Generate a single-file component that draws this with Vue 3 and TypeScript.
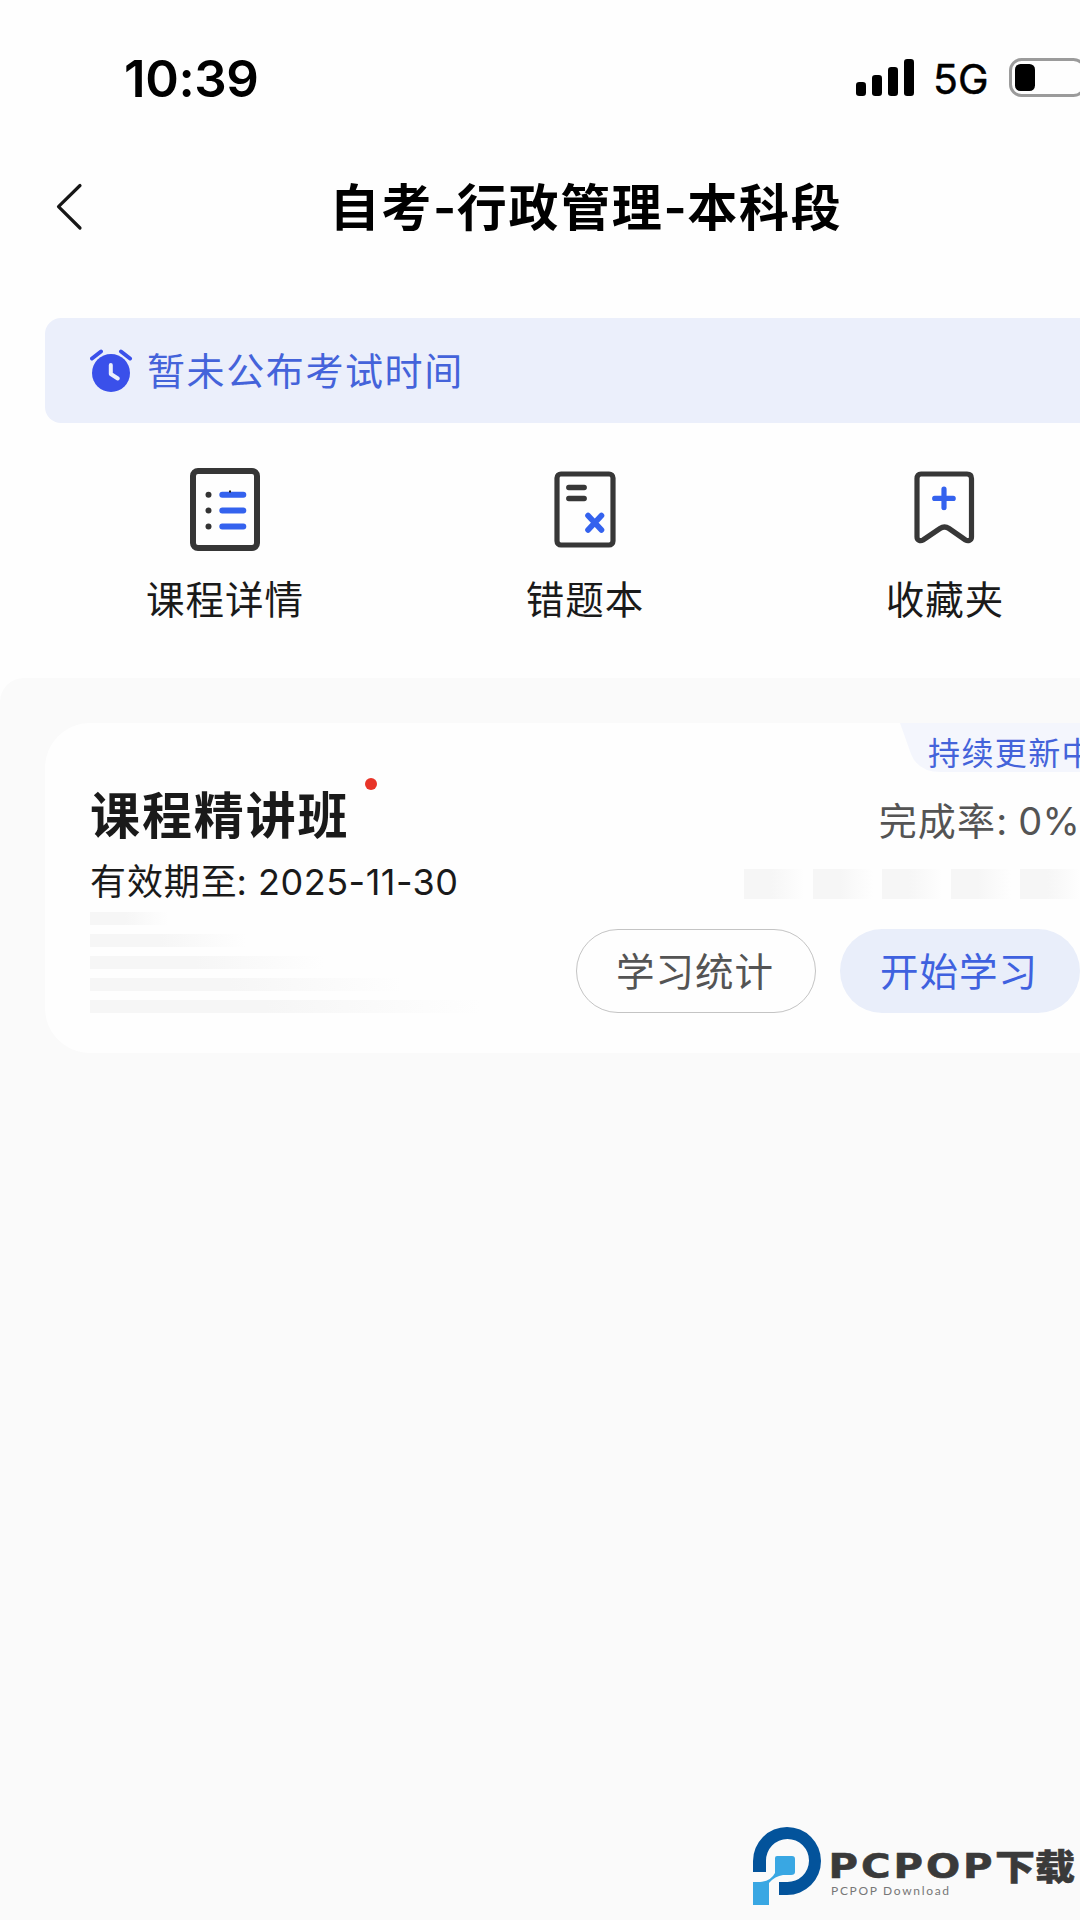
<script setup lang="ts">
interface Shortcut {
  id: 'detail' | 'mistakes' | 'favorites'
  label: string
}

const shortcuts: Shortcut[] = [
  { id: 'detail', label: '课程详情' },
  { id: 'mistakes', label: '错题本' },
  { id: 'favorites', label: '收藏夹' },
]

const stripes: number[] = [78, 156, 234, 312, 390]
const blocks = 5
</script>

<template>
  <div class="viewport">
    <div class="screen">
      <header class="status">
        <span class="time">10:39</span>
        <div class="indicators">
          <svg class="signal" width="58" height="38" viewBox="0 0 58 38">
            <rect x="0" y="23" width="10" height="14" rx="3.2" />
            <rect x="16" y="16" width="10" height="21" rx="3.2" />
            <rect x="32" y="8" width="10" height="29" rx="3.2" />
            <rect x="48" y="0" width="10" height="37" rx="3.2" />
          </svg>
          <span class="network">5G</span>
          <svg class="battery" width="84" height="40" viewBox="0 0 84 40">
            <rect x="1.5" y="1.5" width="74" height="36" rx="11" fill="none" stroke="#9b9b9b" stroke-width="3" />
            <rect x="6" y="6" width="20" height="27" rx="5.5" />
          </svg>
        </div>
      </header>

      <nav class="navbar">
        <svg class="back" width="30" height="50" viewBox="0 0 30 50">
          <path d="M25 3.500 3.500 24.700 25 46" fill="none" stroke="#161616" stroke-width="3.200" stroke-linecap="round" stroke-linejoin="round" />
        </svg>
        <h1 class="title">自考<span class="dash">-</span>行政管理<span class="dash">-</span>本科段</h1>
      </nav>

      <section class="notice">
        <svg class="clock" width="44" height="44" viewBox="0 0 44 44">
          <circle cx="21" cy="24" r="19" fill="#3a50ea" />
          <path d="M2 9.500 11 2.500M31 2.500l9 7" fill="none" stroke="#3a50ea" stroke-width="4" stroke-linecap="round" />
          <path d="M20.800 16v9l7 4.500" fill="none" stroke="#ebeffc" stroke-width="4" stroke-linecap="round" stroke-linejoin="round" />
        </svg>
        <span class="notice-text">暂未公布考试时间</span>
      </section>

      <section class="shortcuts">
        <div v-for="item in shortcuts" :key="item.id" class="shortcut">
          <svg v-if="item.id === 'detail'" width="84" height="84" viewBox="0 0 84 84" fill="none">
            <rect x="10" y="3" width="64" height="77" rx="5" stroke="#363636" stroke-width="6" />
            <g fill="#333">
              <circle cx="25.500" cy="26.700" r="3" />
              <circle cx="25.500" cy="42.500" r="3" />
              <circle cx="25.500" cy="58.500" r="3" />
            </g>
            <path d="M39.300 26.700h21M39.300 42.500h21M39.300 58.500h21" stroke="#3462ee" stroke-width="6" stroke-linecap="round" />
            <rect x="46" y="22.500" width="2" height="2" fill="#222" />
          </svg>
          <svg v-else-if="item.id === 'mistakes'" width="84" height="84" viewBox="0 0 84 84" fill="none">
            <rect x="14" y="6" width="56" height="71" rx="4" stroke="#373737" stroke-width="5.200" />
            <path d="M25.800 19.500h15.400M25.800 30.500h15.400" stroke="#373737" stroke-width="5.400" stroke-linecap="round" />
            <path d="M45 47.500l13.500 14.500M58.500 47.500l-13.500 14.500" stroke="#3462ee" stroke-width="5.600" stroke-linecap="round" />
          </svg>
          <svg v-else width="84" height="84" viewBox="0 0 84 84" fill="none">
            <path d="M18 6H64Q68.500 6 68.500 10.500V69C68.500 72.500 65 73.500 62.500 72L46 60.500Q41.500 57.500 37 60.500L20 72C17.500 73.500 14 72.500 14 69V10.500Q14 6 18 6Z" stroke="#373737" stroke-width="5.200" stroke-linejoin="round" />
            <path d="M31.700 30.400h18.500M41 21.200v18.500" stroke="#3462ee" stroke-width="5.200" stroke-linecap="round" />
          </svg>
          <span>{{ item.label }}</span>
        </div>
      </section>

      <main class="content">
        <article class="card">
          <div class="badge">
            <svg class="badge-shape" width="225" height="49" viewBox="0 0 225 49">
              <path d="M0 0H225V49H41Q18 49 11 31Z" fill="#f4f6fd" />
            </svg>
            <span>持续更新中</span>
          </div>
          <div class="left">
            <h2 class="course">课程精讲班<i class="dot" /></h2>
            <p class="expiry">有效期至<span class="latin">: 2025-11-30</span></p>
            <div class="stripes">
              <i v-for="width in stripes" :key="width" :style="{ width: width + 'px' }" />
            </div>
          </div>
          <div class="right">
            <p class="rate">完成率<span class="latin">: 0%</span></p>
            <div class="blocks">
              <i v-for="n in blocks" :key="n" />
            </div>
            <div class="actions">
              <button class="btn outline">学习统计</button>
              <button class="btn filled">开始学习</button>
            </div>
          </div>
        </article>
      </main>
    </div>

    <svg class="brand" width="330" height="84" viewBox="0 0 330 84">
      <path d="M0 45V34A34 34 0 1 1 34 68H26V55H34A21.500 21.500 0 1 0 13 34V45Z" fill="#03539b" />
      <path d="M24 29H39Q42 29 42 32V45Q42 48 38 48H30Q22 49 16 56V78H0V55H7Q18 54 22 46V31Q22 29 24 29Z" fill="#39a7e3" />
      <text x="75.500" y="51" class="brand-latin" textLength="167" lengthAdjust="spacingAndGlyphs">PCPOP</text>
      <text x="242" y="53" class="brand-han" textLength="80" lengthAdjust="spacingAndGlyphs">下载</text>
      <text x="78" y="67.500" class="brand-sub" textLength="118">PCPOP Download</text>
    </svg>
  </div>
</template>

<style>
body {
  background: #fafafa;
}
</style>

<style scoped>
.viewport {
  position: relative;
  width: 1080px;
  height: 1920px;
  overflow: hidden;
  background: #fefefe;
  color: #1a1a1a;
  font-family: Inter, "Noto Sans CJK SC", sans-serif;
}
.screen {
  display: flex;
  flex-direction: column;
  width: 1170px;
  height: 1920px;
}
h1,
h2,
p {
  margin: 0;
}
.status {
  display: flex;
  justify-content: space-between;
  height: 155px;
  box-sizing: border-box;
  padding: 48px 77px 0 124px;
  color: #000;
}
.time {
  font-size: 51px;
  font-weight: 600;
  line-height: 61px;
  letter-spacing: -0.4px;
}
.indicators {
  display: flex;
  align-items: flex-start;
}
.signal {
  margin-top: 11px;
}
.network {
  width: 76px;
  margin-left: 19px;
  font-size: 41px;
  line-height: 63px;
  -webkit-text-stroke: 0.5px #000;
}
.battery {
  margin-top: 10px;
}
.navbar {
  display: flex;
  align-items: center;
  height: 103px;
  padding-left: 55px;
}
.title {
  flex: 1;
  margin-right: 83px;
  padding-bottom: 5px;
  text-align: center;
  color: #000;
  font-size: 50px;
  font-weight: 600;
  letter-spacing: 1.7px;
}
.dash {
  letter-spacing: 0.5px;
}
.notice {
  display: flex;
  align-items: center;
  height: 105px;
  margin: 60px 45px 0;
  padding-left: 45px;
  border-radius: 16px;
  background: #ebeffb;
  color: #4463da;
  font-size: 38px;
  letter-spacing: 1.6px;
}
.notice-text {
  padding-bottom: 4px;
}
.clock {
  margin-right: 13px;
}
.shortcuts {
  display: flex;
  height: 255px;
  padding: 0 45px;
}
.shortcut {
  display: flex;
  flex: 1;
  flex-direction: column;
  align-items: center;
  padding-top: 45px;
  font-size: 38.500px;
  line-height: 56px;
  letter-spacing: 1px;
}
.shortcut span {
  margin-top: 20px;
}
.content {
  flex: 1;
  padding: 45px;
  border-radius: 24px 24px 0 0;
  background: #fafafa;
}
.card {
  position: relative;
  display: flex;
  justify-content: space-between;
  box-sizing: border-box;
  height: 330px;
  padding: 0 45px;
  overflow: hidden;
  border-radius: 45px;
  background: #fefefe;
}
.badge {
  position: absolute;
  top: 0;
  right: 0;
  width: 225px;
  height: 49px;
}
.badge-shape {
  position: absolute;
  inset: 0;
}
.badge span {
  position: relative;
  display: block;
  padding-left: 28px;
  color: #4463da;
  font-size: 32px;
  line-height: 61px;
  letter-spacing: 1.4px;
}
.left {
  padding-top: 55px;
}
.course {
  height: 78px;
  font-size: 50px;
  font-weight: 600;
  line-height: 62px;
  letter-spacing: 1.9px;
}
.dot {
  display: inline-block;
  width: 12px;
  height: 12px;
  margin-left: 15px;
  border-radius: 50%;
  background: #e83428;
  vertical-align: 44px;
}
.expiry {
  font-size: 36px;
  line-height: 52px;
  letter-spacing: 0.9px;
}
.expiry .latin {
  margin-left: -1px;
  letter-spacing: 0.5px;
}
.stripes {
  display: flex;
  flex-direction: column;
  gap: 9px;
  margin-top: 4px;
}
.stripes i {
  height: 13px;
  background: linear-gradient(90deg, #f6f6f6 45%, #fefefe);
}
.right {
  display: flex;
  flex-direction: column;
  align-items: flex-end;
  padding-top: 70px;
}
.rate {
  color: #545454;
  font-size: 38px;
  line-height: 56px;
  letter-spacing: 1.2px;
}
.rate .latin {
  letter-spacing: 0.2px;
}
.blocks {
  display: flex;
  gap: 9px;
  margin-top: 20px;
}
.blocks i {
  width: 60px;
  height: 30px;
  background: linear-gradient(90deg, #f6f6f6 45%, #fefefe);
}
.actions {
  display: flex;
  gap: 24px;
  margin-top: 30px;
}
.btn {
  width: 240px;
  height: 84px;
  padding: 1px 2px 0 0;
  border: 0;
  border-radius: 42px;
  background: none;
  font: 38.500px/82px Inter, "Noto Sans CJK SC", sans-serif;
  letter-spacing: 1px;
}
.outline {
  border: 1.500px solid #c4c4c4;
  color: #545454;
}
.filled {
  background: #e9eefa;
  color: #3f61df;
}
.brand {
  position: absolute;
  top: 1827px;
  left: 753px;
}
.brand-latin {
  fill: #3a3a3a;
  stroke: #3a3a3a;
  stroke-width: 0.6px;
  font: 900 34px "DejaVu Sans", sans-serif;
  letter-spacing: 2.500px;
}
.brand-han {
  fill: #3a3a3a;
  stroke: #3a3a3a;
  stroke-width: 0.5px;
  font: 900 35px "Noto Sans CJK SC", sans-serif;
}
.brand-sub {
  fill: #777;
  font: 12px Lato, sans-serif;
}
</style>
